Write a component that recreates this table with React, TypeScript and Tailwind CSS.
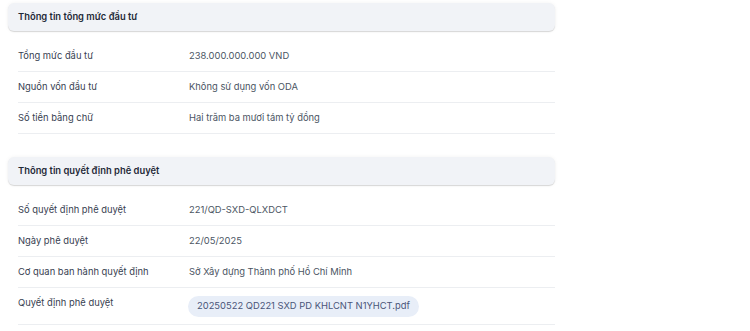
import React from "react";

type Row = { label: string; value: React.ReactNode; tall?: boolean };

function Section({ title, rows }: { title: string; rows: Row[] }) {
  return (
    <div className="flex flex-col">
      <div className="h-[28px] flex items-center px-[10px] rounded-[6px] bg-[#f1f3f7] shadow-[0_1px_1px_rgba(0,0,0,0.14),0_0_4px_rgba(0,0,0,0.05)]">
        <span className="text-[9.4px] font-semibold text-[#1f2937]">{title}</span>
      </div>
      <div className="mt-[10px] ml-[10px] flex flex-col">
        {rows.map((r, i) =>
          r.tall ? (
            <div key={i} className="flex items-start h-[37px] pt-[8px] border-b border-[#eceef1]">
              <div className="w-[171px] shrink-0 pt-[1px] text-[9.4px] leading-[12px] text-[#374151]">{r.label}</div>
              <div className="text-[9.4px] text-[#4b5563]">{r.value}</div>
            </div>
          ) : (
            <div key={i} className="flex items-center h-[31px] pt-[1px] border-b border-[#eceef1]">
              <div className="w-[171px] shrink-0 text-[9.4px] text-[#374151]">{r.label}</div>
              <div className="text-[9.4px] text-[#4b5563]">{r.value}</div>
            </div>
          )
        )}
      </div>
    </div>
  );
}

export default function App() {
  return (
    <div
      className="w-[750px] h-[331px] bg-white overflow-hidden"
      style={{ fontFamily: "Inter, 'Noto Sans', sans-serif" }}
    >
      <div className="w-[547px] ml-[8px] pt-[3px] flex flex-col gap-[23px]">
        <Section
          title="Thông tin tổng mức đầu tư"
          rows={[
            { label: "Tổng mức đầu tư", value: "238.000.000.000 VND" },
            { label: "Nguồn vốn đầu tư", value: "Không sử dụng vốn ODA" },
            { label: "Số tiền bằng chữ", value: "Hai trăm ba mươi tám tỷ đồng" },
          ]}
        />
        <Section
          title="Thông tin quyết định phê duyệt"
          rows={[
            { label: "Số quyết định phê duyệt", value: "221/QD-SXD-QLXDCT" },
            { label: "Ngày phê duyệt", value: "22/05/2025" },
            { label: "Cơ quan ban hành quyết định", value: "Sở Xây dựng Thành phố Hồ Chí Minh" },
            {
              label: "Quyết định phê duyệt",
              tall: true,
              value: (
                <span className="-ml-[1px] inline-flex items-center h-[21px] px-[9px] rounded-full bg-[#e8eef8] text-[#4a5578] text-[9.4px]">
                  20250522 QD221 SXD PD KHLCNT N1YHCT.pdf
                </span>
              ),
            },
          ]}
        />
      </div>
    </div>
  );
}
